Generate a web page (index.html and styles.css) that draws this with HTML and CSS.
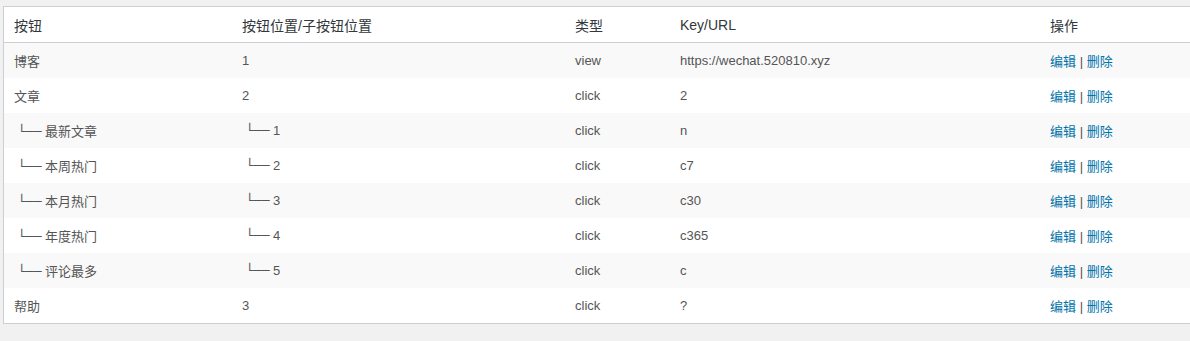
FILE: index.html
```html
<!DOCTYPE html>
<html lang="zh-CN">
<head>
    <meta charset="UTF-8">
    <title>自定义菜单</title>
    <link rel="stylesheet" href="styles.css">
</head>
<body>
    <table class="menu-table">
        <colgroup>
            <col class="col-name">
            <col class="col-pos">
            <col class="col-type">
            <col class="col-key">
            <col class="col-action">
        </colgroup>
        <thead>
            <tr>
                <th>按钮</th>
                <th>按钮位置/子按钮位置</th>
                <th>类型</th>
                <th>Key/URL</th>
                <th>操作</th>
            </tr>
        </thead>
        <tbody>
            <tr>
                <td>博客</td>
                <td>1</td>
                <td>view</td>
                <td>https://wechat.520810.xyz</td>
                <td><a href="#">编辑</a> | <a href="#">删除</a></td>
            </tr>
            <tr>
                <td>文章</td>
                <td>2</td>
                <td>click</td>
                <td>2</td>
                <td><a href="#">编辑</a> | <a href="#">删除</a></td>
            </tr>
            <tr>
                <td><span class="tree">└──</span> 最新文章</td>
                <td><span class="tree">└──</span> 1</td>
                <td>click</td>
                <td>n</td>
                <td><a href="#">编辑</a> | <a href="#">删除</a></td>
            </tr>
            <tr>
                <td><span class="tree">└──</span> 本周热门</td>
                <td><span class="tree">└──</span> 2</td>
                <td>click</td>
                <td>c7</td>
                <td><a href="#">编辑</a> | <a href="#">删除</a></td>
            </tr>
            <tr>
                <td><span class="tree">└──</span> 本月热门</td>
                <td><span class="tree">└──</span> 3</td>
                <td>click</td>
                <td>c30</td>
                <td><a href="#">编辑</a> | <a href="#">删除</a></td>
            </tr>
            <tr>
                <td><span class="tree">└──</span> 年度热门</td>
                <td><span class="tree">└──</span> 4</td>
                <td>click</td>
                <td>c365</td>
                <td><a href="#">编辑</a> | <a href="#">删除</a></td>
            </tr>
            <tr>
                <td><span class="tree">└──</span> 评论最多</td>
                <td><span class="tree">└──</span> 5</td>
                <td>click</td>
                <td>c</td>
                <td><a href="#">编辑</a> | <a href="#">删除</a></td>
            </tr>
            <tr>
                <td>帮助</td>
                <td>3</td>
                <td>click</td>
                <td>?</td>
                <td><a href="#">编辑</a> | <a href="#">删除</a></td>
            </tr>
        </tbody>
    </table>
</body>
</html>
```

FILE: styles.css
```css
* {
    margin: 0;
    padding: 0;
    box-sizing: border-box;
}

body {
    font-family: 'Liberation Sans', 'Noto Sans CJK SC', sans-serif;
    background: #f1f1f1;
    color: #555;
    padding: 6px 0 0 3px;
    overflow: hidden;
}

.menu-table {
    width: 1260px;
    table-layout: fixed;
    border-collapse: separate;
    border-spacing: 0;
    background: #fff;
    border: 1px solid #ccd0d4;
    box-shadow: 0 1px 1px rgba(0, 0, 0, 0.04);
}

.col-name { width: 228px; }
.col-pos { width: 333px; }
.col-type { width: 105px; }
.col-key { width: 370px; }

.menu-table th {
    text-align: left;
    font-weight: 400;
    font-size: 14px;
    color: #32373c;
    height: 36px;
    padding: 0 10px;
    border-bottom: 1px solid #ccd0d4;
}

.menu-table td {
    font-size: 13px;
    height: 35px;
    padding: 0 10px;
    white-space: nowrap;
}

.menu-table tbody tr:nth-child(odd) {
    background: #f9f9f9;
}

.tree {
    font-family: 'DejaVu Sans', sans-serif;
    padding-left: 4px;
}

.menu-table a {
    color: #0073aa;
    text-decoration: none;
}
```
